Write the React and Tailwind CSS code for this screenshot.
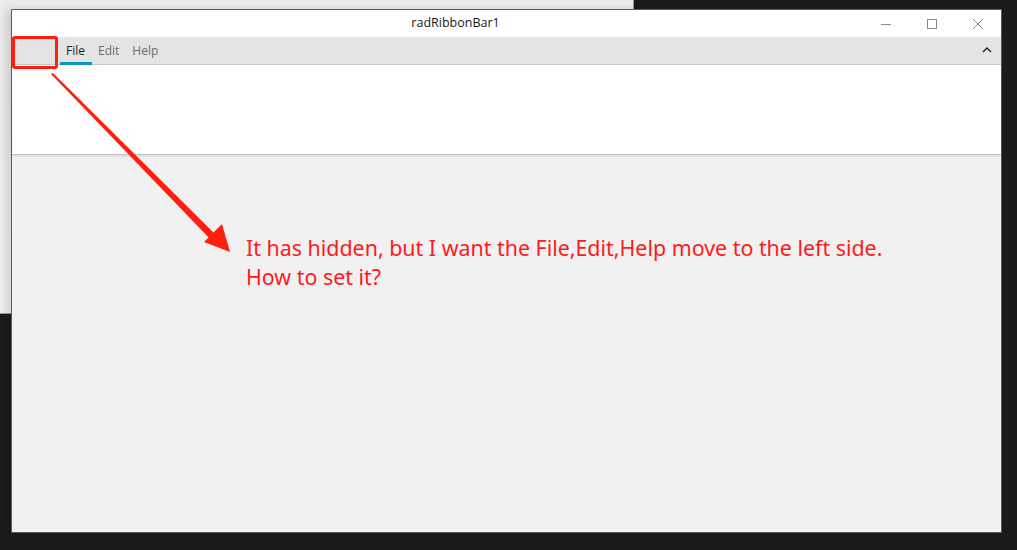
import React from 'react';

const ui = { fontFamily: '"Open Sans", "Noto Sans", sans-serif' };
const note = { fontFamily: '"Noto Sans", "Noto Sans CJK SC", sans-serif' };

const WindowControls = () => (
  <div className="flex items-center h-full">
    {/* minimize */}
    <div className="w-[46px] h-full flex items-center justify-center">
      <svg width="12" height="12" viewBox="0 0 12 12">
        <line x1="1" y1="6.5" x2="11" y2="6.5" stroke="#8a8a8a" strokeWidth="1" />
      </svg>
    </div>
    {/* maximize */}
    <div className="w-[46px] h-full flex items-center justify-center">
      <svg width="12" height="12" viewBox="0 0 12 12">
        <rect x="1.5" y="1.5" width="9" height="9" fill="none" stroke="#8a8a8a" strokeWidth="1" />
      </svg>
    </div>
    {/* close */}
    <div className="w-[46px] h-full flex items-center justify-center">
      <svg width="12" height="12" viewBox="0 0 12 12">
        <path d="M1 1 L11 11 M11 1 L1 11" stroke="#8a8a8a" strokeWidth="1" />
      </svg>
    </div>
  </div>
);

const Tab = ({ label, active }) => (
  <div className="relative h-full pl-[6px] pr-[7px] flex items-center">
    <span className={`text-[12px] ${active ? 'text-[#1e1e1e]' : 'text-[#6d6d6d]'}`}>{label}</span>
    {active && <div className="absolute left-0 right-0 bottom-[-1px] h-[3px] bg-[#0a96be]" />}
  </div>
);

const Arrow = () => (
  <svg className="absolute left-0 top-0 pointer-events-none" width="1017" height="550">
    {/* tapered shaft */}
    <polygon points="51,74 53,73 219,238 214,243" fill="#ff1e10" />
    {/* head */}
    <polygon points="230,252 204,242 222,224" fill="#ff1e10" />
  </svg>
);

export default function App() {
  return (
    <div className="relative w-[1017px] h-[550px] bg-[#1b1b1b] overflow-hidden" style={ui}>
      {/* window behind */}
      <div className="absolute left-0 top-0 w-[634px] h-[314px] bg-gradient-to-b from-[#ececec] to-[#f2f2f2] border-r border-b border-[#9a9a9a]" />

      {/* main window */}
      <div className="absolute left-[11px] top-[9px] w-[991px] h-[524px] border border-[#5a5a5a] bg-[#f1f1f1] flex flex-col shadow-[-6px_0_8px_rgba(0,0,0,0.12)]">
        {/* title bar */}
        <div className="h-[27px] bg-white flex items-center shrink-0">
          <div className="flex-1 flex justify-center pl-[36px]">
            <span className="text-[12.5px] text-[#1a1a1a]">radRibbonBar1</span>
          </div>
          <WindowControls />
        </div>

        {/* tab strip */}
        <div className="h-[28px] bg-[#e4e4e4] border-b border-[#c9c9c9] flex items-center shrink-0">
          <div className="w-[48px] h-full" />
          <div className="flex h-full items-center">
            <Tab label="File" active />
            <Tab label="Edit" />
            <Tab label="Help" />
          </div>
          <div className="flex-1" />
          <div className="w-[28px] h-full flex items-center justify-center pb-[3px]">
            <svg width="10" height="7" viewBox="0 0 10 7">
              <path d="M1 6 L5 2 L9 6" fill="none" stroke="#1f2a3a" strokeWidth="1.5" />
            </svg>
          </div>
        </div>

        {/* ribbon body */}
        <div className="h-[90px] bg-white border-b border-[#c4c4c4] shadow-[0_1px_2px_rgba(0,0,0,0.12)] shrink-0" />

        {/* content */}
        <div className="flex-1 pl-[234px] pt-[78px]">
          <p className="text-[21.4px] leading-[29px] text-[#ff1a1a]" style={note}>
            It has hidden, but I want the File,Edit,Help move to the left side.
            <br />
            How to set it?
          </p>
        </div>
      </div>

      {/* annotation box */}
      <div className="absolute left-[12px] top-[36px] w-[46px] h-[33px] border-[3px] border-[#ff1e10] rounded-[3px]" />
      <Arrow />
    </div>
  );
}
